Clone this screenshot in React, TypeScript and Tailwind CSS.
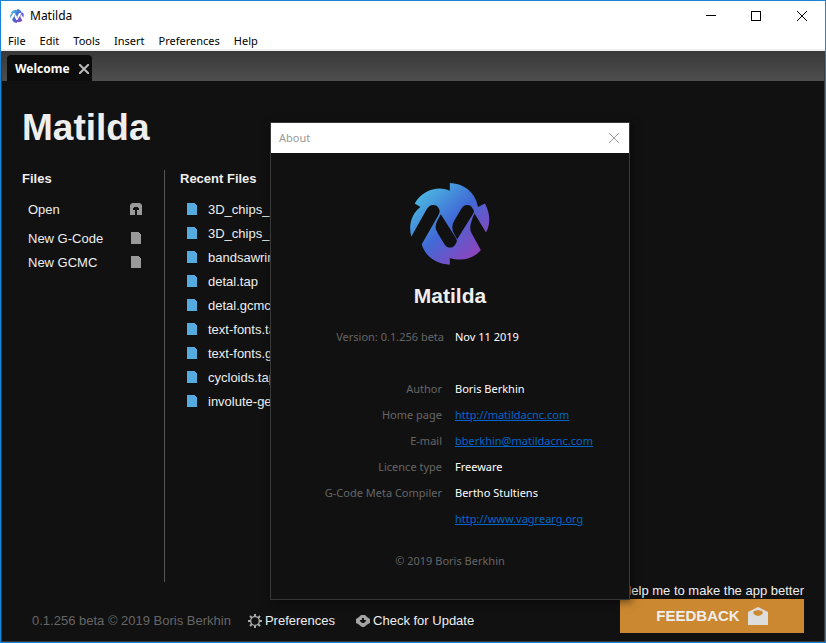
import React from 'react';

const recentFiles = [
  '3D_chips_2.tap',
  '3D_chips_3.tap',
  'bandsawring.tap',
  'detal.tap',
  'detal.gcmc',
  'text-fonts.tap',
  'text-fonts.gcmc',
  'cycloids.tap',
  'involute-gears.tap',
];

const details: { label: string; value: string; href?: string }[] = [
  { label: 'Author', value: 'Boris Berkhin' },
  { label: 'Home page', value: 'http://matildacnc.com', href: 'http://matildacnc.com' },
  { label: 'E-mail', value: 'bberkhin@matildacnc.com', href: 'mailto:bberkhin@matildacnc.com' },
  { label: 'Licence type', value: 'Freeware' },
  { label: 'G-Code Meta Compiler', value: 'Bertho Stultiens' },
  { label: '', value: 'http://www.vagrearg.org', href: 'http://www.vagrearg.org' },
];

function Logo({ id, hole, className }: { id: string; hole: string; className: string }) {
  return (
    <svg viewBox="45 38 239 245" className={className} aria-hidden="true">
      <defs>
        <linearGradient id={id} gradientUnits="userSpaceOnUse" x1="75" y1="75" x2="250" y2="245">
          <stop offset="0" stopColor="#4ab5e0" />
          <stop offset="0.5" stopColor="#4169d6" />
          <stop offset="1" stopColor="#8e44bd" />
        </linearGradient>
      </defs>
      <path
        fill={`url(#${id})`}
        d="M164 38C208 40 242 68 248 110L269 99C284 127 287 158 272 186L257 238C231 268 196 272 164 262V282C122 280 89 256 80 220L49 198C39 164 51 129 76 110L59 99C84 58 128 46 164 61Z"
      />
      <g fill={hole}>
        <path d="M40 214L94 118Q102 104 114 104Q126 104 131 114Q136 122 131 132L80 221L66 240Z" />
        <path d="M137 131L183 204Q187 210 183 217Q176 231 165 231Q154 231 148 221L128 188Q115 169 128 148Z" />
        <path d="M186 206L178 192Q164 169 179 148L197 117Q204 104 216 104Q227 104 232 114Q239 122 234 129Z" />
        <path d="M238 129L272 186L290 215L257 239L229 188Q222 176 227 158Q230 144 238 129Z" />
      </g>
    </svg>
  );
}

function FileIcon({ className }: { className: string }) {
  return (
    <svg viewBox="0 0 10 12" className={`mb-[2px] h-3 w-[10px] ${className}`} aria-hidden="true">
      <path fill="currentColor" d="M0 0H8V1H9V2H10V12H0Z" />
    </svg>
  );
}

function OpenIcon() {
  return (
    <svg viewBox="0 0 12 12" className="mb-[2px] h-3 w-3 text-[#999]" aria-hidden="true">
      <path
        fill="currentColor"
        fillRule="evenodd"
        d="M2 0H10L12 2V12H7V7H9V5H8V4H4V5H3V7H5V12H0V2Z"
      />
    </svg>
  );
}

function GearIcon() {
  return (
    <svg viewBox="0 0 14 14" className="h-[14px] w-[14px] text-[#aaa]" fill="none" stroke="currentColor" aria-hidden="true">
      <circle cx="7" cy="7" r="4.4" strokeWidth="1.4" />
      <path
        strokeWidth="2"
        d="M7 0V2.5M7 11.5V14M0 7H2.5M11.5 7H14M2 2L3.8 3.8M10.2 10.2L12 12M12 2L10.2 3.8M3.8 10.2L2 12"
      />
    </svg>
  );
}

function CloudIcon() {
  return (
    <svg viewBox="0 0 14 12" className="h-3 w-[14px] text-[#a3a3a3]" aria-hidden="true">
      <path
        fill="currentColor"
        fillRule="evenodd"
        d="M5 0H9L11 2L14 4V8L12 9L8 12H6L2 9L0 8V4L3 2ZM6 3V5H4V6L6 8H8L10 6V5H8V3Z"
      />
    </svg>
  );
}

function MailIcon() {
  return (
    <svg viewBox="0 0 20 18" className="h-[18px] w-5 text-[#ddd]" aria-hidden="true">
      <path
        fill="currentColor"
        fillRule="evenodd"
        d="M0 5L8 1L10 0L12 1L20 5V18H0ZM10 3L6 4L5 6L7 8L10 9L13 8L15 6L14 4Z"
      />
    </svg>
  );
}

function Cross({ className, width }: { className: string; width: number }) {
  return (
    <svg viewBox="0 0 10 10" className={className} stroke="currentColor" strokeWidth={width} aria-hidden="true">
      <path d="M0 0L10 10M10 0L0 10" />
    </svg>
  );
}

function TitleBar() {
  return (
    <header className="bg-white text-black">
      <div className="flex h-[29px] items-center pl-[9px]">
        <Logo id="small-logo" hole="#fff" className="h-[14px] w-[14px]" />
        <span className="ml-[6px] flex-1 text-[12px]">Matilda</span>
        <button type="button" aria-label="Minimize" className="flex h-[29px] w-[45px] items-center justify-center">
          <span className="h-px w-[10px] bg-black" />
        </button>
        <button type="button" aria-label="Maximize" className="flex h-[29px] w-[45px] items-center justify-center">
          <span className="h-[10px] w-[10px] border border-black" />
        </button>
        <button type="button" aria-label="Close" className="flex h-[29px] w-[47px] items-center justify-center">
          <Cross className="h-[10px] w-[10px]" width={1} />
        </button>
      </div>
      <nav className="flex h-[21px] items-center gap-[14px] border-b-2 border-[#f0f0f0] pt-[3px] pl-[7px] text-[11px]">
        {['File', 'Edit', 'Tools', 'Insert', 'Preferences', 'Help'].map((name) => (
          <button type="button" key={name}>
            {name}
          </button>
        ))}
      </nav>
    </header>
  );
}

function AboutDialog() {
  return (
    <section
      role="dialog"
      aria-label="About"
      className="absolute top-[121px] left-[269px] flex h-[478px] w-[360px] flex-col border border-[#383838] bg-[#111] text-[11px] leading-[26px] text-[#666] shadow-[2px_2px_8px_rgba(0,0,0,0.5)]"
    >
      <div className="flex h-[30px] items-center justify-between bg-white pr-[10px] pl-2 text-[#999]">
        <span>About</span>
        <button type="button" aria-label="Close dialog">
          <Cross className="h-[10px] w-[10px]" width={1} />
        </button>
      </div>
      <div className="flex flex-col items-center pt-[30px]">
        <Logo id="large-logo" hole="#111" className="h-[82px] w-20" />
        <h2 className="mt-[18px] font-['Liberation_Sans',Arial,sans-serif] text-[21px] font-bold text-[#eee]">Matilda</h2>
      </div>
      <div className="mt-[15px] grid grid-cols-[173px_1fr] gap-x-[11px]">
        <span className="text-right">Version: 0.1.256 beta</span>
        <span className="text-white">Nov 11 2019</span>
      </div>
      <dl className="mt-[26px] grid grid-cols-[171px_1fr] gap-x-[13px]">
        {details.map((row) => (
          <React.Fragment key={row.value}>
            <dt className="text-right">{row.label}</dt>
            <dd className="text-white">
              {row.href ? (
                <a href={row.href} className="text-[#0066cc] underline">
                  {row.value}
                </a>
              ) : (
                row.value
              )}
            </dd>
          </React.Fragment>
        ))}
      </dl>
      <p className="mt-4 text-center">© 2019 Boris Berkhin</p>
    </section>
  );
}

export default function App() {
  return (
    <div className="relative flex min-h-screen flex-col border border-[#1883d7] bg-[#111] font-['Noto_Sans','Open_Sans',sans-serif]">
      <TitleBar />
      <div className="flex flex-1 flex-col border-x border-b border-[#3a3a3a]">
        <div className="flex h-[30px] items-end bg-linear-to-b from-[#393939] to-[#4e4e4e] pl-[5px]">
          <div className="flex h-[26px] items-center gap-[9px] rounded-t bg-[#0c0c0c] pt-px pr-[3px] pl-2 text-[12px] font-bold text-white">
            <span>Welcome</span>
            <button type="button" aria-label="Close tab" className="text-[#bbb]">
              <Cross className="h-[10px] w-[10px]" width={2} />
            </button>
          </div>
        </div>
        <main className="flex flex-1 flex-col pt-[25px] pr-5 pb-2 pl-5 font-['Liberation_Sans',Arial,sans-serif] text-[13px] leading-6 text-[#eee]">
          <h1 className="text-[37px] leading-[44px] font-bold">Matilda</h1>
          <div className="mt-5 flex flex-1">
            <section className="w-[143px] border-r border-[#555]">
              <h2 className="pt-px leading-4 font-bold">Files</h2>
              <div className="mt-[11px] flex flex-col pr-[22px] pl-[6px]">
                <button type="button" className="mb-[5px] flex items-center justify-between">
                  Open
                  <OpenIcon />
                </button>
                <button type="button" className="flex items-center justify-between pr-px">
                  New G-Code
                  <FileIcon className="text-[#999]" />
                </button>
                <button type="button" className="flex items-center justify-between pr-px">
                  New GCMC
                  <FileIcon className="text-[#999]" />
                </button>
              </div>
            </section>
            <section className="pl-[15px]">
              <h2 className="pt-px leading-4 font-bold">Recent Files</h2>
              <ul className="mt-[11px] pl-[7px]">
                {recentFiles.map((name) => (
                  <li key={name}>
                    <button type="button" className="flex items-center gap-[11px]">
                      <FileIcon className="text-[#55aae0]" />
                      {name}
                    </button>
                  </li>
                ))}
              </ul>
            </section>
          </div>
          <footer className="flex items-end justify-between">
            <div className="flex items-center pl-[10px]">
              <span className="text-[#666]">0.1.256 beta © 2019 Boris Berkhin</span>
              <button type="button" className="ml-[17px] flex items-center gap-[3px]">
                <GearIcon />
                Preferences
              </button>
              <button type="button" className="ml-[21px] flex items-center gap-[3px]">
                <CloudIcon />
                Check for Update
              </button>
            </div>
            <div className="flex w-[184px] flex-col">
              <span className="text-right leading-[17px] whitespace-nowrap">Help me to make the app better</span>
              <button
                type="button"
                className="flex h-[34px] items-center justify-center gap-2 bg-[#cb8830] text-[15px] font-bold"
              >
                FEEDBACK
                <MailIcon />
              </button>
            </div>
          </footer>
        </main>
      </div>
      <AboutDialog />
    </div>
  );
}
